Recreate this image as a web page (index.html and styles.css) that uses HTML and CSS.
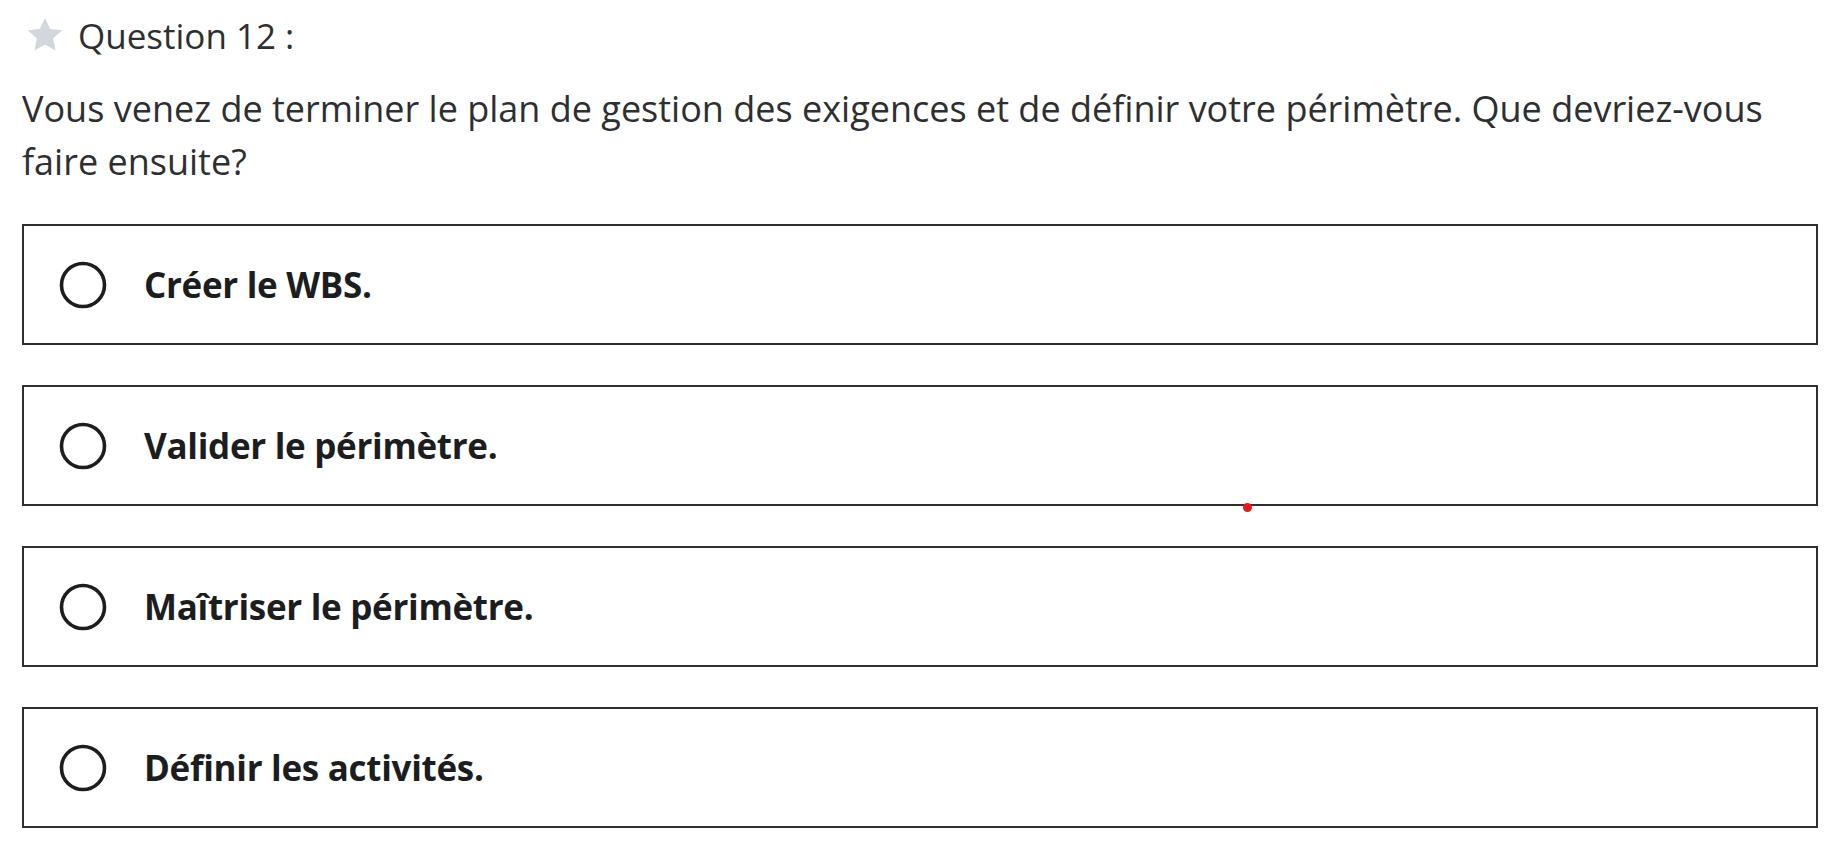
FILE: index.html
```html
<!DOCTYPE html>
<html lang="fr">
<head>
<meta charset="utf-8">
<title>Question 12</title>
<link rel="stylesheet" href="styles.css">
</head>
<body>
<div class="page">
  <div class="header">
    <svg class="star" viewBox="0 0 40 40" width="38" height="38" aria-hidden="true">
      <polygon points="20,2 25.3,13.6 38,15 28.5,23.7 31.1,36.3 20,29.9 8.9,36.3 11.5,23.7 2,15 14.7,13.6" fill="#d1d7dc"/>
    </svg>
    <span class="qtitle">Question 12 :</span>
  </div>
  <p class="prompt">Vous venez de terminer le plan de gestion des exigences et de définir votre périmètre. Que devriez-vous faire ensuite?</p>
  <div class="options">
    <div class="option">
      <svg class="radio" viewBox="0 0 48 48" width="48" height="48" aria-hidden="true"><circle cx="24" cy="24" r="21.5" fill="none" stroke="#1c1d1f" stroke-width="3.6"/></svg>
      <span class="label">Créer le WBS.</span>
    </div>
    <div class="option">
      <svg class="radio" viewBox="0 0 48 48" width="48" height="48" aria-hidden="true"><circle cx="24" cy="24" r="21.5" fill="none" stroke="#1c1d1f" stroke-width="3.6"/></svg>
      <span class="label">Valider le périmètre.</span>
    </div>
    <div class="option">
      <svg class="radio" viewBox="0 0 48 48" width="48" height="48" aria-hidden="true"><circle cx="24" cy="24" r="21.5" fill="none" stroke="#1c1d1f" stroke-width="3.6"/></svg>
      <span class="label">Maîtriser le périmètre.</span>
    </div>
    <div class="option">
      <svg class="radio" viewBox="0 0 48 48" width="48" height="48" aria-hidden="true"><circle cx="24" cy="24" r="21.5" fill="none" stroke="#1c1d1f" stroke-width="3.6"/></svg>
      <span class="label">Définir les activités.</span>
    </div>
  </div>
  <span class="dot"></span>
</div>
</body>
</html>
```
FILE: styles.css
```css
html, body {
  margin: 0;
  padding: 0;
  background: #ffffff;
}
.page {
  position: relative;
  width: 1796px;
  padding-left: 22px;
  font-family: "Open Sans", "Liberation Sans", sans-serif;
  color: #2d2f31;
}
.header {
  display: flex;
  align-items: center;
  gap: 14px;
  height: 50px;
  padding-top: 10px;
  padding-left: 4px;
}
.star {
  display: block;
  flex: none;
}
.qtitle {
  font-size: 35px;
}
.prompt {
  margin: 22px 0 0 0;
  font-size: 36px;
  line-height: 53px;
}
.options {
  display: flex;
  flex-direction: column;
  gap: 40px;
  margin-top: 36px;
}
.option {
  box-sizing: border-box;
  height: 121px;
  border: 2px solid #2d2f31;
  display: flex;
  align-items: center;
  padding-left: 35px;
}
.radio {
  display: block;
  flex: none;
}
.label {
  margin-left: 37px;
  font-size: 35px;
  font-weight: 700;
  color: #1c1d1f;
  letter-spacing: -0.3px;
}
.dot {
  position: absolute;
  left: 1243px;
  top: 503px;
  width: 9px;
  height: 9px;
  border-radius: 50%;
  background: #e5191c;
}
```
